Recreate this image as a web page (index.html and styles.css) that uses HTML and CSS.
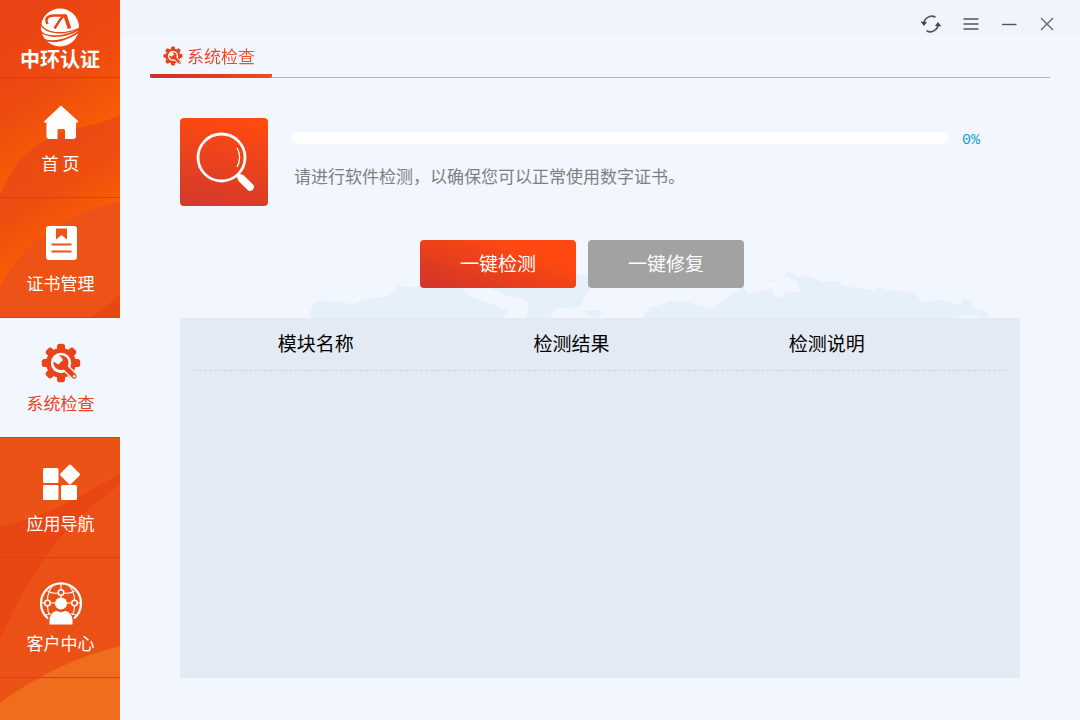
FILE: index.html
```html
<!DOCTYPE html>
<html lang="zh-CN">
<head>
<meta charset="utf-8">
<title>中环认证</title>
<link rel="stylesheet" href="styles.css">
</head>
<body>
<svg class="defs" aria-hidden="true">
  <symbol id="gear" viewBox="0 0 40 40">
    <g fill="currentColor">
      <circle cx="20" cy="20" r="15"/>
      <rect x="16" y="0.8" width="8" height="38.4" rx="2.8"/>
      <rect x="16" y="0.8" width="8" height="38.4" rx="2.8" transform="rotate(45 20 20)"/>
      <rect x="16" y="0.8" width="8" height="38.4" rx="2.8" transform="rotate(90 20 20)"/>
      <rect x="16" y="0.8" width="8" height="38.4" rx="2.8" transform="rotate(135 20 20)"/>
    </g>
    <circle cx="20" cy="20" r="10.200" fill="#f2f6fe"/>
    <path d="M24 24 34 34" stroke="#f2f6fe" stroke-width="8" stroke-linecap="round"/>
    <path d="M21 21 33.200 33.200" stroke="currentColor" stroke-width="5" stroke-linecap="round"/>
    <path d="M18 12.500C23 11.500 27.500 15 27.500 19.500 27.500 24.500 23.500 27.500 19.500 27 15 26.500 12 23 12.500 18.500L16.500 21C18.500 21.500 20.500 20.500 21.500 18.500 22 16.500 21.500 14.500 18 12.500Z" fill="currentColor"/>
    <circle cx="33.200" cy="33.200" r="1.300" fill="#f2f6fe"/>
  </symbol>
</svg>
<div class="app">
  <aside class="sidebar">
    <svg class="sidebar-art" viewBox="0 0 120 720" preserveAspectRatio="none" aria-hidden="true">
      <defs>
        <linearGradient id="top" gradientUnits="userSpaceOnUse" x1="20" y1="20" x2="100" y2="140">
          <stop offset="0" stop-color="#ea4314"/><stop offset="0.500" stop-color="#ee4b10"/><stop offset="1" stop-color="#fc5f02"/>
        </linearGradient>
        <linearGradient id="mid" gradientUnits="userSpaceOnUse" x1="30" y1="150" x2="85" y2="235">
          <stop offset="0" stop-color="#ea4b13"/><stop offset="0.450" stop-color="#ee4d10"/><stop offset="1" stop-color="#fc5f02"/>
        </linearGradient>
        <linearGradient id="low" x1="0" y1="0" x2="0" y2="1">
          <stop offset="0" stop-color="#ed5317"/><stop offset="1" stop-color="#ea5216"/>
        </linearGradient>
      </defs>
      <rect width="120" height="200" fill="url(#top)"/>
      <path d="M0 195C18 150 45 137 78 128 96 124 110 120 120 115V300H0Z" fill="url(#mid)"/>
      <path d="M0 286C20 248 60 213 120 202V720H0Z" fill="url(#low)"/>
      <path d="M90 318C100 312 112 302 120 294V318Z" fill="#e64814"/>
      <path d="M0 527C45 517 85 495 120 473V485C70 520 35 560 0 640Z" fill="#e84713"/>
      <path d="M0 640C35 560 70 520 120 485V660H0Z" fill="#eb5117"/>
      <path d="M0 703C35 677 75 657 120 646V720H0Z" fill="#ef6d1d"/>
    </svg>
    <div class="brand">
      <svg class="brand-mark" viewBox="0 0 40 40" aria-hidden="true">
        <circle cx="20" cy="19.500" r="19" fill="#fff"/>
        <path d="M-1 14V2H12C5 4 2 8 1.500 14Z" fill="#ea4314"/>
        <g fill="none" stroke="#ea4515">
          <path d="M26 7.500H14C7 7.500 5 11 7.500 16" stroke-width="2.600"/>
          <path d="M14.500 20.500 20 12Q23 7.500 25.500 7.500" stroke-width="2.400"/>
          <path d="M25 7 29.500 20.500" stroke-width="3.600"/>
          <path d="M0 15C5 27 24 27 40 20" stroke-width="1.300"/>
          <path d="M0 23C8 31 26 29 40 21" stroke-width="1.600"/>
          <path d="M2 31C13 36 28 32 40 23" stroke-width="1.800"/>
        </g>
      </svg>
      <span class="brand-name">中环认证</span>
    </div>
    <nav class="nav">
      <a class="nav-item" href="#home">
        <svg class="nav-icon" viewBox="0 0 40 40" aria-hidden="true"><path d="M20 2.500 37 18C37.500 19 37 19.500 36 19.500H35V33.500C35 35 34 36 32.500 36H24V28C24 26.500 23.500 26 22 26H18.500C17 26 16.500 26.500 16.500 28V36H8C6.500 36 5.500 35 5.500 33.500V19.500H4C3 19.500 2.500 19 3.500 18Z" fill="#fff"/></svg>
        <span>首 页</span>
      </a>
      <a class="nav-item" href="#certs">
        <svg class="nav-icon" viewBox="0 0 40 40" aria-hidden="true"><rect x="5" y="3" width="31" height="34" rx="3" fill="#fff"/><path d="M15 5.500H26V16.500L20.500 12 15 16.500Z" fill="#ed5314"/><path d="M10.500 21.500H30.500M10.500 28.500H30.500" stroke="#ed5314" stroke-width="2"/></svg>
        <span>证书管理</span>
      </a>
      <a class="nav-item active" href="#check" aria-current="page">
        <svg class="nav-icon" aria-hidden="true"><use href="#gear"/></svg>
        <span>系统检查</span>
      </a>
      <a class="nav-item" href="#apps">
        <svg class="nav-icon" viewBox="0 0 40 40" aria-hidden="true"><g fill="#fff"><rect x="2" y="5" width="15.500" height="15" rx="1.500"/><rect x="2" y="22" width="15.500" height="15" rx="1.500"/><rect x="20" y="22" width="16" height="15" rx="1.500"/><rect x="21.500" y="4" width="15" height="15" rx="1.500" transform="rotate(45 29 11.500)"/></g></svg>
        <span>应用导航</span>
      </a>
      <a class="nav-item" href="#service">
        <svg class="nav-icon large" viewBox="0 0 44 44" aria-hidden="true">
          <g fill="none" stroke="#fff">
            <path d="M9 37.500A20 20 0 1 1 35 37.500" stroke-width="2.200"/>
            <g stroke-width="1.100">
              <path d="M22 2V9M2 22H6M11 22H33M38 22H42M8.500 10C12 12.500 16 12.500 19 12M25 12C28 12.500 32 12.500 35.500 10M14 4.500C10 9 8.500 14 8.500 19M30 4.500C34 9 35.500 14 35.500 19M8.500 25C8.500 29 9 31 10.500 34M35.500 25C35.500 29 35 31 33.500 34M7 34 12 32.500M37 34 32 32.500M22 14V18"/>
            </g>
            <g stroke-width="1.500"><circle cx="22" cy="11.500" r="2.800"/><circle cx="8.500" cy="22" r="2.800"/><circle cx="35.500" cy="22" r="2.800"/></g>
          </g>
          <circle cx="22" cy="22.500" r="6" fill="#fff"/><path d="M10.500 43.500V39C11 33.500 14 30.500 18 30 20.500 31.500 23.500 31.500 26 30 30 30.500 33 33.500 33.500 39V43.500Z" fill="#fff"/>
        </svg>
        <span>客户中心</span>
      </a>
    </nav>
  </aside>

  <main class="main">
    <svg class="map" viewBox="310 268 680 52" aria-hidden="true"><g fill="#e6f0fa">
      <path d="M310 320V311L315 302Q326 300 332 301L352 304 370 299 384 297Q392 294 397 286L414 287 440 280 462 288 469 296 479 300 497 306 509 312 501 320Z"/>
      <path d="M480 284 505 295Q520 298 529 302L526 320H549L556 308 581 307 584 297 593 287 591 278 585 275H540L500 278Z"/>
      <path d="M580 311 600 310 602 313 596 320 588 314Z"/>
      <path d="M641 320 650 307Q662 305 670 301L688 302 710 309 730 295 743 286 748 294 772 289 774 296 781 298 787 291 800 292 797 282 785 275 788 271 800 277 807 275 822 282 840 281 842 286 874 290 879 287 888 290 914 292 922 302 942 300 961 305 963 299 969 298 976 308 989 312 986 320 975 315 962 316 948 320Z"/>
      <path d="M767 281 776 279 773 282Z"/>
    </g></svg>
    <header class="titlebar">
      <button class="win-btn" type="button" aria-label="刷新"><svg viewBox="0 0 22 22" aria-hidden="true"><g fill="none" stroke="#555" stroke-width="1.600"><path d="M4 12A7.800 7.800 0 0 1 15.500 4.200"/><path d="M18 10A7.800 7.800 0 0 1 6.500 17.800"/></g><path d="M0.500 8.500 7 9 4 13ZM21.500 13.500 15 13 18 9Z" fill="#444"/></svg></button>
      <button class="win-btn" type="button" aria-label="菜单"><svg viewBox="0 0 22 22" aria-hidden="true"><path d="M3.500 6H18.500M3.500 11H18.500M3.500 16H18.500" stroke="#555" stroke-width="1.400"/></svg></button>
      <button class="win-btn" type="button" aria-label="最小化"><svg viewBox="0 0 22 22" aria-hidden="true"><path d="M4 11.500H18.500" stroke="#555" stroke-width="1.400"/></svg></button>
      <button class="win-btn" type="button" aria-label="关闭"><svg viewBox="0 0 22 22" aria-hidden="true"><path d="M5 5 17 17M17 5 5 17" stroke="#666" stroke-width="1.400"/></svg></button>
    </header>
    <div class="tabs">
      <h1 class="tab"><svg class="tab-icon" aria-hidden="true"><use href="#gear"/></svg><span class="tab-text">系统检查</span></h1>
    </div>
    <section class="status">
      <svg class="status-icon" viewBox="0 0 88 88" aria-hidden="true">
        <defs><linearGradient id="tile" x1="0.600" y1="0" x2="0.400" y2="1"><stop offset="0" stop-color="#ff4a10"/><stop offset="1" stop-color="#d63a2a"/></linearGradient></defs>
        <rect width="88" height="88" rx="4" fill="url(#tile)"/>
        <circle cx="41.500" cy="39.500" r="23.500" fill="none" stroke="#fff" stroke-width="2.800"/>
        <path d="M57 30C60.500 35 60.500 43 57 49" fill="none" stroke="#fff" stroke-width="1.300"/>
        <path d="M57 56 61 60" stroke="#fff" stroke-width="5"/>
        <path d="M61.500 60.500 70 69" stroke="#fff" stroke-width="7.600" stroke-linecap="round"/>
      </svg>
      <div class="status-body">
        <div class="progress-row">
          <progress class="progress" value="0" max="100" aria-label="检测进度"></progress>
          <span class="percent">0%</span>
        </div>
        <p class="hint">请进行软件检测，以确保您可以正常使用数字证书。</p>
      </div>
    </section>
    <div class="actions">
      <button class="btn primary" type="button">一键检测</button>
      <button class="btn muted" type="button">一键修复</button>
    </div>
    <section class="panel">
      <table class="results">
        <thead><tr><th class="col-name" scope="col">模块名称</th><th class="col-result" scope="col">检测结果</th><th class="col-note" scope="col">检测说明</th></tr></thead>
        <tbody></tbody>
      </table>
    </section>
  </main>
</div>
</body>
</html>
```
FILE: styles.css
```css
* { box-sizing: border-box; }

body {
  margin: 0;
  font-family: "Noto Sans CJK SC", "Noto Sans", sans-serif;
  background: #f2f6fe;
}

.defs { position: absolute; width: 0; height: 0; }

.app { display: flex; min-height: 100vh; }

.sidebar {
  position: relative;
  flex: 0 0 120px;
  background: #eb5117;
}

.sidebar-art { position: absolute; inset: 0; width: 100%; height: 100%; }

.brand {
  position: relative;
  height: 78px;
  padding-top: 8px;
  display: flex;
  flex-direction: column;
  align-items: center;
  border-bottom: 1px solid #e93418;
}

.brand-mark { width: 40px; height: 40px; }

.brand-name {
  color: #fff;
  font-size: 20px;
  font-weight: 700;
  line-height: 22px;
}

.nav { position: relative; }

.nav-item {
  height: 120px;
  padding: 25px 0 0 1px;
  display: flex;
  flex-direction: column;
  align-items: center;
  gap: 8px;
  color: #fff;
  font-size: 17px;
  line-height: 23px;
  text-decoration: none;
  border-bottom: 1px solid #e93a18;
}

.nav-item.active { background: #f2f6fe; color: #e8431a; }

.nav-icon { width: 40px; height: 40px; }

.nav-icon.large { width: 44px; height: 44px; margin: -2px 0; }

.main {
  position: relative;
  flex: 1;
  min-width: 0;
  display: flex;
  flex-direction: column;
  background: linear-gradient(#f0f5fd 36px, #f2f6fe 36px);
}

.map { position: absolute; left: 190px; top: 268px; width: 680px; height: 52px; }

.titlebar {
  height: 38px;
  padding: 12px 22px 0 0;
  display: flex;
  justify-content: flex-end;
  gap: 16px;
}

.win-btn {
  width: 22px;
  height: 24px;
  padding: 0;
  border: 0;
  background: none;
}

.win-btn:first-child { margin-right: 2px; }

.win-btn svg { display: block; width: 22px; height: 22px; margin: 1px 0; }

.tabs {
  height: 40px;
  margin: 0 30px;
  display: flex;
  background: linear-gradient(#b4b4b8, #b4b4b8) 0 39px / 100% 1px no-repeat;
}

.tab {
  width: 122px;
  margin: 0;
  padding: 0 0 4px 13px;
  display: flex;
  align-items: center;
  gap: 4px;
  color: #e8431f;
  font-size: 17px;
  font-weight: 400;
  line-height: 24px;
  border-radius: 2px;
  background: linear-gradient(90deg, #cc302a, #f14a1c) 0 100% / 100% 4px no-repeat;
}

.tab-icon { width: 20px; height: 20px; }

.tab-text {
  background: linear-gradient(90deg, #dd3d28, #ff5218);
  background-clip: text;
  color: transparent;
}

.status {
  margin: 40px 60px 0;
  display: flex;
  gap: 24px;
}

.status-icon { flex: 0 0 88px; height: 88px; }

.status-body { flex: 1; padding-top: 12px; }

.progress-row {
  height: 22px;
  padding-right: 40px;
  display: flex;
  align-items: center;
  gap: 14px;
}

.progress {
  flex: 1;
  height: 12px;
  margin-bottom: 6px;
  appearance: none;
  border: 0;
  border-radius: 6px;
  overflow: hidden;
  background: #fff;
}

.progress::-webkit-progress-bar { background: #fff; }
.progress::-webkit-progress-value { background: #1296db; }

.percent {
  color: #1b9cd8;
  font-family: "Liberation Mono", monospace;
  font-size: 15px;
  line-height: 22px;
}

.hint {
  margin: 12px 0 0;
  padding-left: 2px;
  color: #808080;
  font-size: 17px;
  line-height: 24px;
}

.actions {
  position: relative;
  margin: 34px 36px 0 0;
  display: flex;
  justify-content: center;
  gap: 12px;
}

.btn {
  width: 156px;
  height: 48px;
  padding: 0 0 4px;
  border: 0;
  border-radius: 4px;
  color: #fff;
  font-family: inherit;
  font-size: 19px;
}

.primary { background: linear-gradient(20deg, #cf342c, #ff4910 75%); }
.muted { background: #a2a2a2; }

.panel {
  position: relative;
  flex: 1;
  margin: 30px 60px 42px;
  padding: 0 14px;
  background: #e3eaf4;
}

.results { width: 100%; border-collapse: collapse; table-layout: fixed; }

.results th {
  height: 52px;
  padding: 0 0 2px;
  font-size: 19px;
  font-weight: 400;
  color: #000;
  border-bottom: 1px dashed #cfd0d8;
}

.results .col-name { width: 30%; }
.results .col-result { width: 33%; }
.results .col-note { padding-right: 58px; }
```
